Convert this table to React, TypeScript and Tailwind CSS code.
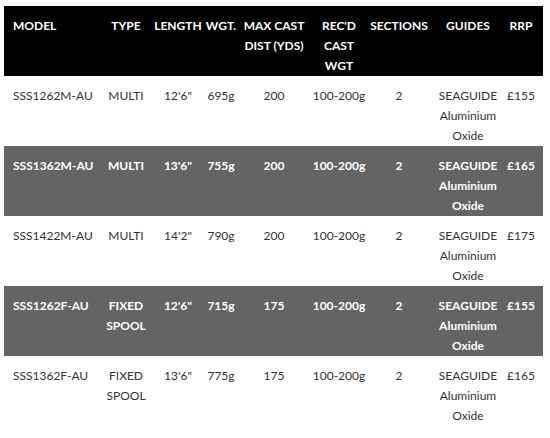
const cols = [
  { w: "w-[96px]", align: "text-left pl-[9px]" },
  { w: "w-[52px]", align: "text-center" },
  { w: "w-[52px]", align: "text-center" },
  { w: "w-[34px]", align: "text-center" },
  { w: "w-[72px]", align: "text-center" },
  { w: "w-[58px]", align: "text-center" },
  { w: "w-[62px]", align: "text-center" },
  { w: "w-[76px]", align: "text-center" },
  { w: "w-[30px]", align: "text-center" },
]

const header = ["MODEL", "TYPE", "LENGTH", "WGT.", "MAX CAST DIST (YDS)", "REC'D CAST WGT", "SECTIONS", "GUIDES", "RRP"]

const rows = [
  ["SSS1262M-AU", "MULTI", "12'6\"", "695g", "200", "100-200g", "2", "SEAGUIDE Aluminium Oxide", "£155"],
  ["SSS1362M-AU", "MULTI", "13'6\"", "755g", "200", "100-200g", "2", "SEAGUIDE Aluminium Oxide", "£165"],
  ["SSS1422M-AU", "MULTI", "14'2\"", "790g", "200", "100-200g", "2", "SEAGUIDE Aluminium Oxide", "£175"],
  ["SSS1262F-AU", "FIXED SPOOL", "12'6\"", "715g", "175", "100-200g", "2", "SEAGUIDE Aluminium Oxide", "£155"],
  ["SSS1362F-AU", "FIXED SPOOL", "13'6\"", "775g", "175", "100-200g", "2", "SEAGUIDE Aluminium Oxide", "£165"],
]

function Row({ cells, className }: { cells: string[]; className: string }) {
  return (
    <div className={`flex h-[70px] pt-[10px] pr-[7px] ${className}`}>
      {cells.map((c, i) => (
        <div key={i} className={`${cols[i].w} ${cols[i].align} shrink-0`}>
          {c}
        </div>
      ))}
    </div>
  )
}

export default function App() {
  return (
    <div className="bg-white w-[550px] h-[438px] pt-[6px] pl-[4px] text-[12px] leading-[20px] font-['Lato',sans-serif]">
      <div className="w-[539px]">
        <Row cells={header} className="bg-black text-white font-bold" />
        {rows.map((r, i) => (
          <Row
            key={i}
            cells={r}
            className={i % 2 === 1 ? "bg-[#646464] text-white font-bold" : "bg-white text-[#333333]"}
          />
        ))}
      </div>
    </div>
  )
}
